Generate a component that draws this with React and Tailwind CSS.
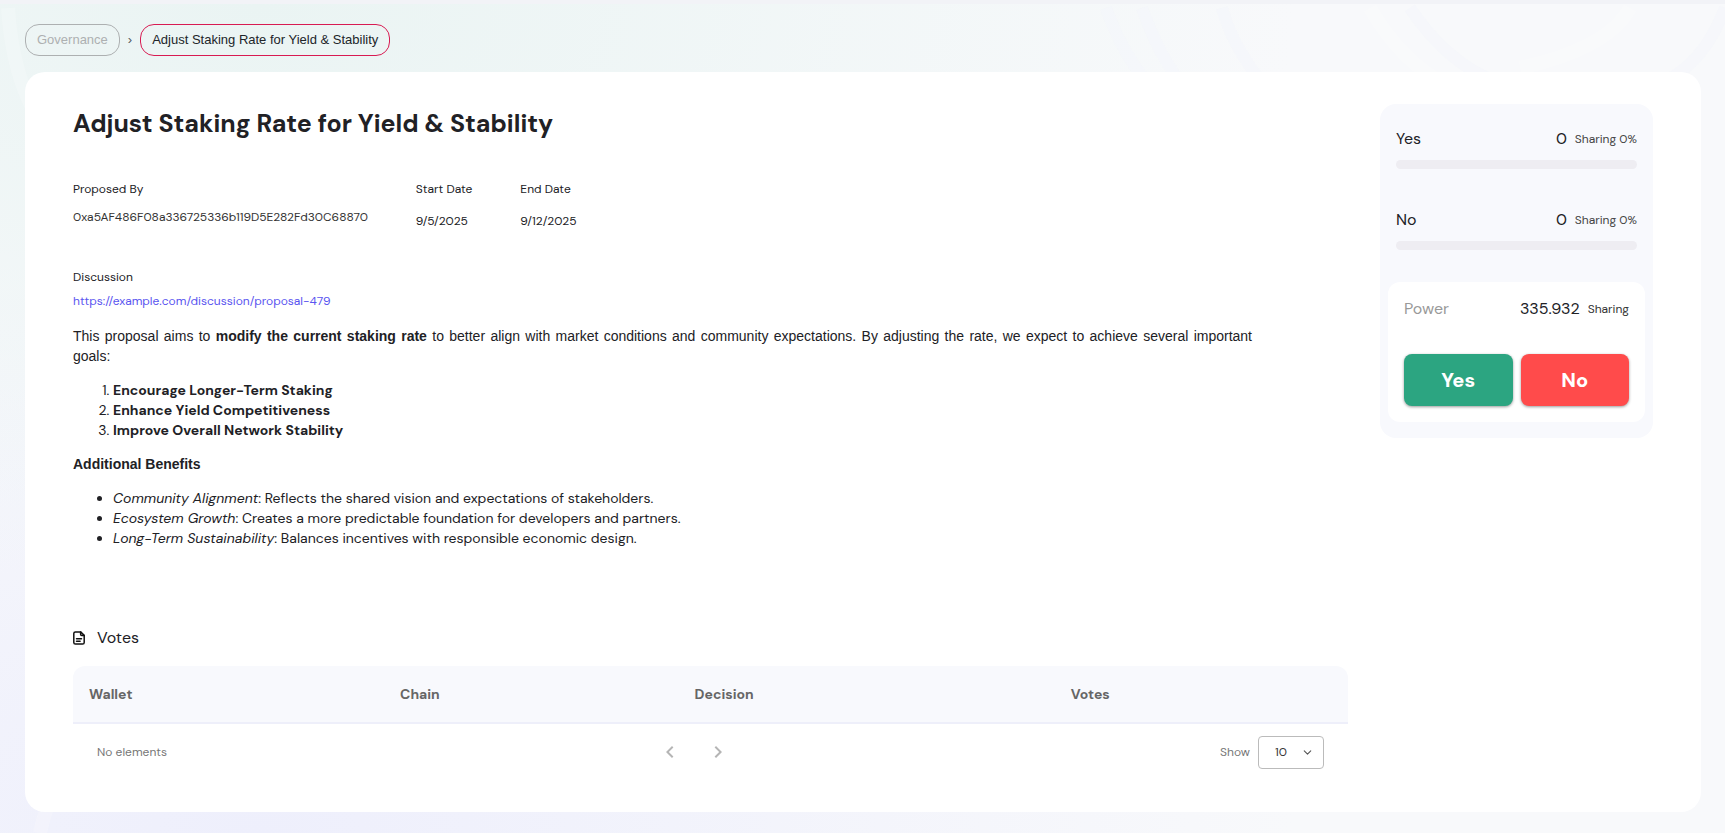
import React from 'react';
import { ChevronDown } from 'lucide-react';
import { MdChevronLeft, MdChevronRight } from 'react-icons/md';

const proposal = {
  title: 'Adjust Staking Rate for Yield & Stability',
  proposedBy: '0xa5AF486F08a336725336b119D5E282Fd30C68870',
  startDate: '9/5/2025',
  endDate: '9/12/2025',
  discussion: 'https://example.com/discussion/proposal-479'
};

const goals = [
  'Encourage Longer-Term Staking',
  'Enhance Yield Competitiveness',
  'Improve Overall Network Stability'
];

const benefits = [
  { name: 'Community Alignment', text: 'Reflects the shared vision and expectations of stakeholders.' },
  { name: 'Ecosystem Growth', text: 'Creates a more predictable foundation for developers and partners.' },
  { name: 'Long-Term Sustainability', text: 'Balances incentives with responsible economic design.' }
];

const columns = [
  { label: 'Wallet', width: 'w-[24.4%]' },
  { label: 'Chain', width: 'w-[23.1%]' },
  { label: 'Decision', width: 'w-[29.5%]' },
  { label: 'Votes', width: 'w-[23%]' }
];

const DocumentIcon = () => (
  <svg width="12" height="14" viewBox="0 0 12 14" fill="none" stroke="#111" strokeWidth="1.5" strokeLinecap="round" strokeLinejoin="round" aria-hidden="true">
    <path d="M7.6.9H2.4C1.5.9.8 1.6.8 2.5v9c0 .9.7 1.6 1.6 1.6h7.2c.9 0 1.6-.7 1.6-1.6V4.4L7.6.9Z" />
    <path d="M7.6.9v2.3c0 .7.5 1.2 1.2 1.2h2.4M3.5 7.7h5M3.5 10.2h3.6" />
  </svg>
);

// Soft waves behind the page
const Backdrop = () => (
  <svg className="absolute inset-0 h-full w-full" viewBox="0 0 1725 833" preserveAspectRatio="none" fill="none" aria-hidden="true">
    <g stroke="#f3f5fc" strokeOpacity="0.5" strokeWidth="12">
      <path d="M1106 4c12 34 26 56 44 80M1142 4c12 34 24 56 42 80M1222 4c8 30 24 56 44 80" />
      <path d="M1410 4c40 60 90 90 180 90s120-50 135-90" />
    </g>
    <g stroke="#ffffff" strokeOpacity="0.2" strokeWidth="14">
      <path d="M8 4c4 60 20 110 60 150M1370 4c40 70 100 106 210 106M1630 4c-16 30-60 50-110 60" />
      <path d="M40 833c6-30 20-60 40-80" />
    </g>
  </svg>
);

const Breadcrumb = () => (
  <nav className="flex items-center gap-2 font-['Liberation_Sans',sans-serif] text-[13px] leading-5">
    <a href="#governance" className="rounded-[14px] border border-[#adb0b1] px-[11px] py-[5px] text-[#adb0b1]">
      Governance
    </a>
    <span className="text-[#55585c]">›</span>
    <span className="rounded-[14px] border border-[#d81b52] px-[11px] py-[5px] text-[#212529]">{proposal.title}</span>
  </nav>
);

const VoteResult = ({ label, votes, percent }) => (
  <div className="px-2">
    <div className="flex h-[22px] items-center justify-between">
      <span className="text-base">{label}</span>
      <div className="flex items-center gap-2">
        <span className="text-base">{votes}</span>
        <span className="text-xs text-[#444]">Sharing {percent}%</span>
      </div>
    </div>
    <div className="mt-[10px] h-[9px] overflow-hidden rounded-full bg-[#eeedf2]">
      <div className="h-full bg-[#2ca581]" style={{ width: `${percent}%` }} />
    </div>
  </div>
);

const VotePanel = () => (
  <aside className="w-[273px] shrink-0 rounded-2xl bg-[#f8f9fd] px-2 pt-6 pb-4">
    <div className="flex flex-col gap-10">
      <VoteResult label="Yes" votes={0} percent={0} />
      <VoteResult label="No" votes={0} percent={0} />
    </div>
    <div className="mt-8 rounded-xl bg-white p-4">
      <div className="flex h-[22px] items-center justify-between">
        <span className="text-base text-[#999]">Power</span>
        <div className="flex items-center gap-2">
          <span className="text-base">335.932</span>
          <span className="text-xs text-[#333]">Sharing</span>
        </div>
      </div>
      <div className="mt-[34px] grid grid-cols-2 gap-2 text-xl font-extrabold text-white">
        <button type="button" className="h-[52px] rounded-lg bg-[#2ca581] shadow-[0_1px_3px_rgba(0,0,0,0.4)]">Yes</button>
        <button type="button" className="h-[52px] rounded-lg bg-[#ff4b4b] shadow-[0_1px_3px_rgba(0,0,0,0.4)]">No</button>
      </div>
    </div>
  </aside>
);

const Description = () => (
  <div className="mt-4 pr-24 text-sm leading-5">
    <p className="text-justify font-['Liberation_Sans',sans-serif]">
      This proposal aims to <strong>modify the current staking rate</strong> to better align with market conditions and
      community expectations. By adjusting the rate, we expect to achieve several important goals:
    </p>
    <ol className="mt-[14px] list-decimal pl-10">
      {goals.map((goal) => (
        <li key={goal}>
          <strong>{goal}</strong>
        </li>
      ))}
    </ol>
    <p className="mt-[14px] font-['Liberation_Sans',sans-serif] font-bold">Additional Benefits</p>
    <ul className="mt-[14px] list-disc pl-10">
      {benefits.map((benefit) => (
        <li key={benefit.name}>
          <em>{benefit.name}</em>: {benefit.text}
        </li>
      ))}
    </ul>
  </div>
);

const VotesTable = () => (
  <section className="mt-[78px]">
    <h2 className="flex items-center gap-3 text-base leading-6">
      <DocumentIcon />
      Votes
    </h2>
    <table className="mt-4 w-full table-fixed border-separate border-spacing-0 text-left text-sm">
      <thead>
        <tr>
          {columns.map((column) => (
            <th
              key={column.label}
              scope="col"
              className={`${column.width} h-[58px] border-b-2 border-[#eeeffa] bg-[#f8f9fd] px-4 font-bold text-[#666] first:rounded-tl-xl last:rounded-tr-xl`}
            >
              {column.label}
            </th>
          ))}
        </tr>
      </thead>
    </table>
    <div className="flex h-14 items-center justify-between px-6 text-xs text-[#777]">
      <span>No elements</span>
      <div className="flex gap-6 text-[#b5b5b5]">
        <button type="button" aria-label="Previous page">
          <MdChevronLeft size={24} />
        </button>
        <button type="button" aria-label="Next page">
          <MdChevronRight size={24} />
        </button>
      </div>
      <div className="flex items-center gap-2">
        <label htmlFor="pageSize">Show</label>
        <div className="relative">
          <select
            id="pageSize"
            defaultValue="10"
            className="block h-[33px] w-[66px] appearance-none rounded-sm border border-[#bbb] bg-white pl-4 text-xs text-[#333]"
          >
            <option>10</option>
            <option>25</option>
            <option>50</option>
          </select>
          <ChevronDown size={13} className="pointer-events-none absolute top-[10px] right-[10px] text-[#555]" />
        </div>
      </div>
    </div>
  </section>
);

const App = () => {
  return (
    <div className="relative min-h-screen border-t-4 border-[#f2f3f7] bg-[radial-gradient(ellipse_at_15%_0%,#eaf4f3_0%,transparent_50%),radial-gradient(ellipse_at_15%_100%,#eeeffc_0%,transparent_50%)] bg-[#f8f9fb] pt-5 pr-6 pb-5 pl-[25px] font-['DM_Sans',Inter,sans-serif] text-[#212125]">
      <Backdrop />
      <div className="relative">
        <Breadcrumb />
        <main className="mt-4 flex items-start gap-8 rounded-[20px] bg-white px-12 py-8">
          <div className="min-w-0 flex-1">
            <h1 className="text-[25px] leading-10 font-bold">{proposal.title}</h1>
            <dl className="mt-9 flex gap-12 text-xs leading-[18px]">
              <div>
                <dt>Proposed By</dt>
                <dd className="mt-[10px] text-[#333]">{proposal.proposedBy}</dd>
              </div>
              <div>
                <dt>Start Date</dt>
                <dd className="mt-[14px]">{proposal.startDate}</dd>
              </div>
              <div>
                <dt>End Date</dt>
                <dd className="mt-[14px]">{proposal.endDate}</dd>
              </div>
            </dl>
            <div className="mt-[38px] text-xs leading-[18px]">
              <p>Discussion</p>
              <a href={proposal.discussion} className="mt-[6px] block text-[#5a55f0]">
                {proposal.discussion}
              </a>
            </div>
            <Description />
            <VotesTable />
          </div>
          <VotePanel />
        </main>
      </div>
    </div>
  );
};

export default App;
